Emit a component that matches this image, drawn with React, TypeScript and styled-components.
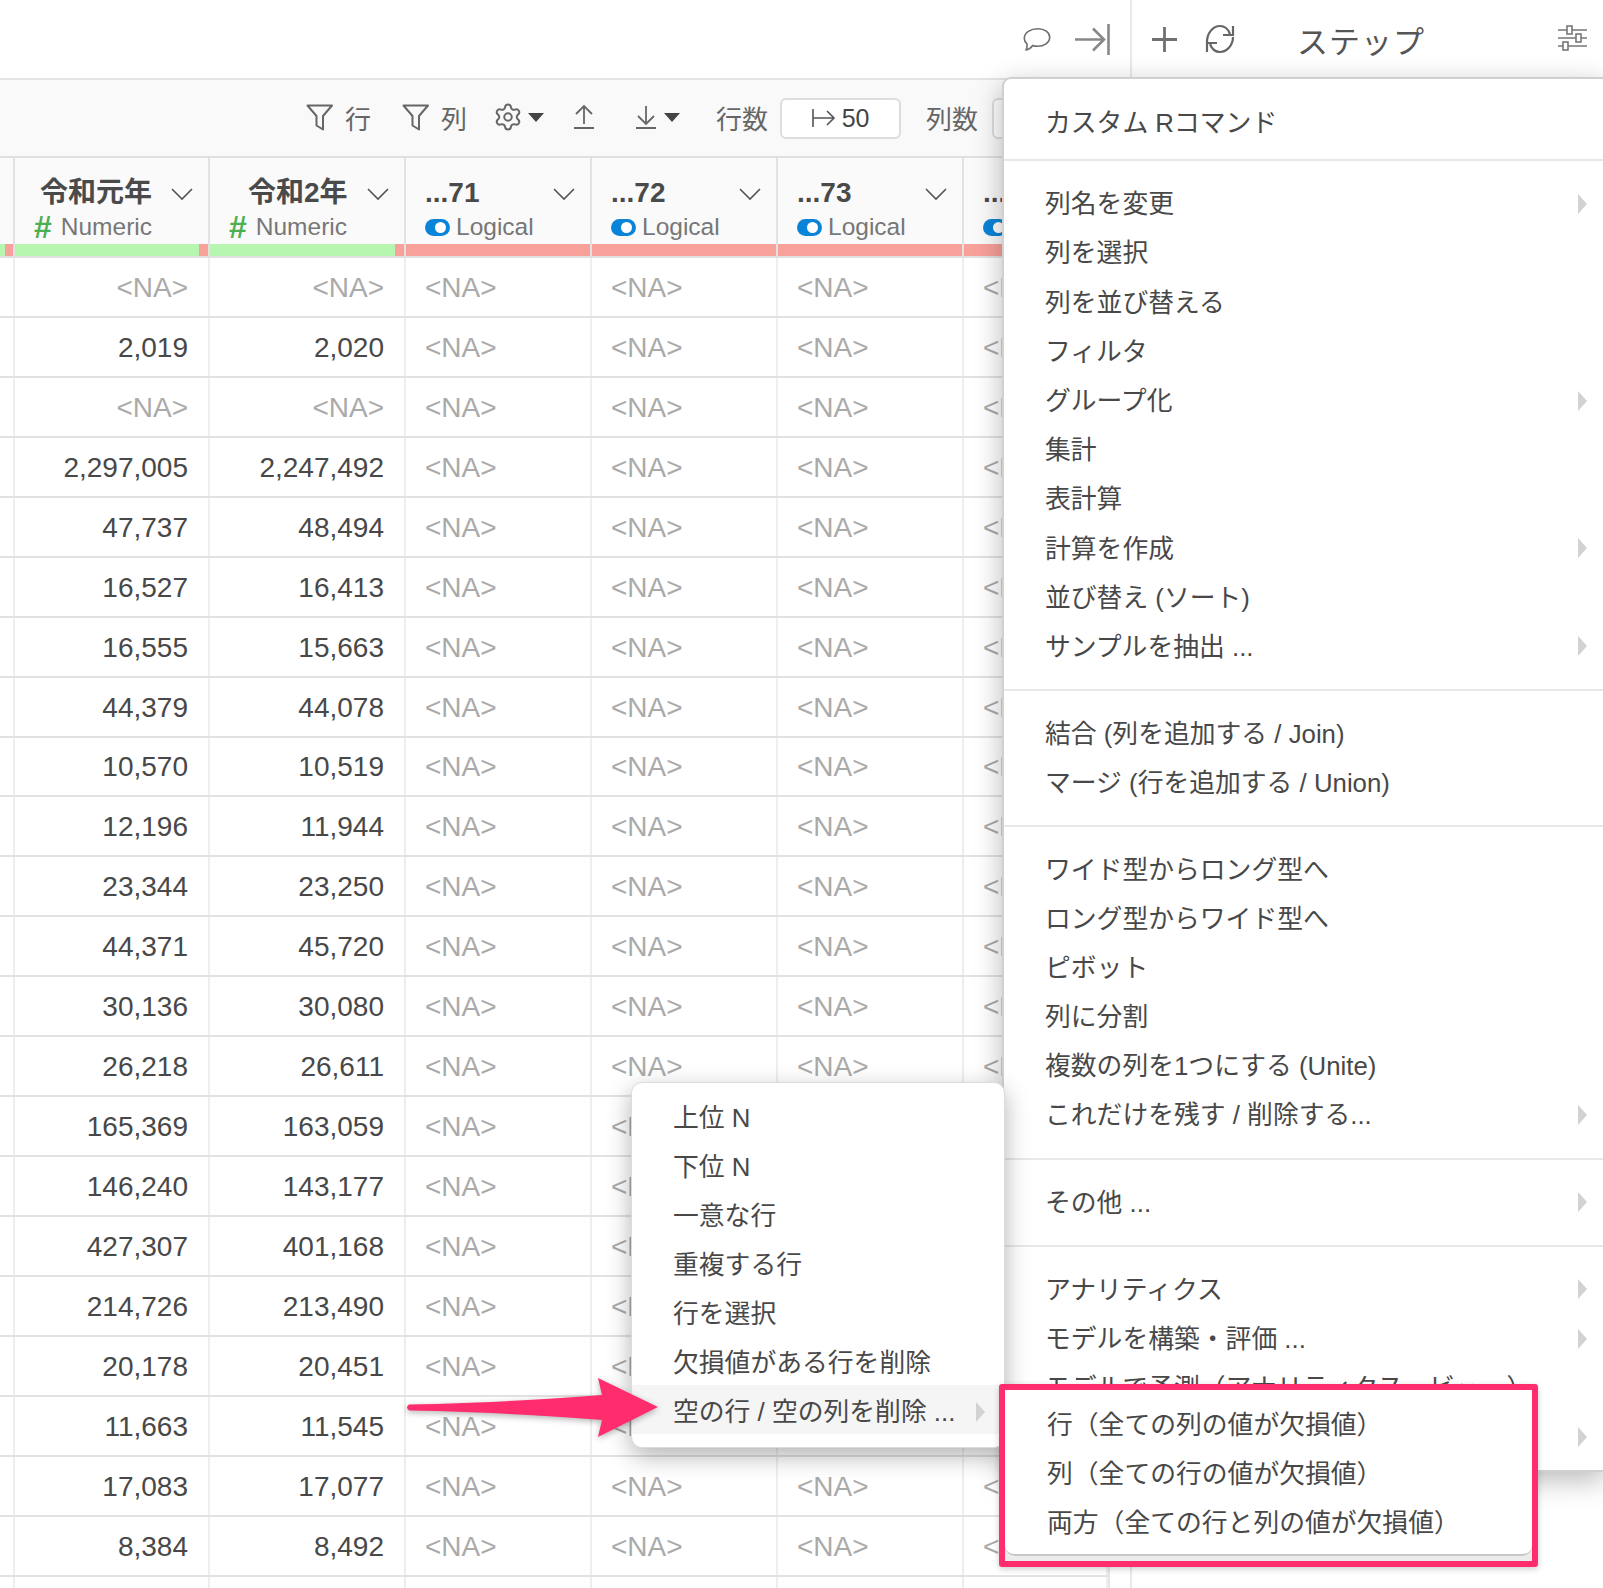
import React from "react";
import styled, { createGlobalStyle } from "styled-components";
import { Settings } from "lucide-react";

const Global = createGlobalStyle`
  html, body { margin: 0; padding: 0; background: #fff; }
  * { box-sizing: border-box; }
  #root { width: 1603px; height: 1588px; overflow: hidden; position: relative; }
`;

const FONT = `"Liberation Sans", "Noto Sans CJK JP", sans-serif`;

const Page = styled.div`
  display: flex;
  width: 1603px;
  height: 1588px;
  overflow: hidden;
  position: relative;
  font-family: ${FONT};
  color: #444;
  background: #fff;
`;
const LeftPane = styled.div`
  width: 1130px;
  flex: none;
  display: flex;
  flex-direction: column;
`;
const RightPane = styled.div`
  flex: 1;
  border-left: 2px solid #e9e9e9;
`;
const TopBar = styled.div`
  height: 78px;
  flex: none;
  display: flex;
  align-items: center;
  justify-content: flex-end;
  padding-right: 19px;
  gap: 24px;
  color: #777;
`;
const RightHeader = styled.div`
  height: 78px;
  display: flex;
  align-items: center;
  padding-left: 20px;
  color: #666;
`;
const RefreshSlot = styled.span`
  display: flex;
  margin-left: 28px;
`;
const StepTitle = styled.div`
  font-size: 31px;
  letter-spacing: 1px;
  color: #555;
  margin-left: 62px;
  flex: 1;
`;
const SliderSlot = styled.span`
  display: flex;
  margin: 0 16px 2px 0;
`;
const Toolbar = styled.div`
  height: 80px;
  flex: none;
  display: flex;
  align-items: center;
  background: #f9f9f9;
  border-top: 2px solid #e4e4e4;
  border-bottom: 2px solid #e0e0e0;
  padding: 0 0 2px 306px;
  font-size: 26px;
  color: #666;
`;
const ToolItem = styled.span<{ $ml?: number }>`
  display: inline-flex;
  align-items: center;
  margin-left: ${(p) => p.$ml ?? 0}px;
  color: #666;
  white-space: nowrap;
`;
const ToolLabel = styled.span`
  margin-left: 12px;
`;
const Caret = styled.span<{ $ml?: number }>`
  display: inline-block;
  width: 0;
  height: 0;
  margin-left: ${(p) => p.$ml ?? 7}px;
  border-left: 8px solid transparent;
  border-right: 8px solid transparent;
  border-top: 9px solid #444;
`;
const RowCountBtn = styled.span`
  width: 121px;
  height: 41px;
  margin: 2px 0 0 12px;
  display: inline-flex;
  align-items: center;
  justify-content: center;
  gap: 6px;
  background: #fff;
  border: 2px solid #ddd;
  border-radius: 6px;
  font-size: 25px;
  color: #444;
`;
const ColCountBtn = styled(RowCountBtn)`
  margin-left: 14px;
`;
const Table = styled.div`
  width: 1110px;
  flex: 1;
  border-right: 2px solid #e6e6e6;
  overflow: hidden;
`;
const COLS = "15px 195px 196px 186px 186px 186px 144px";
const HeadRow = styled.div`
  display: grid;
  grid-template-columns: ${COLS};
  height: 100px;
  background: #fafafa;
  border-bottom: 2px solid #e0e0e0;
`;
const HeadCell = styled.div`
  position: relative;
  display: flex;
  flex-direction: column;
  border-right: 2px solid #e2e2e2;
  min-width: 0;
  overflow: hidden;
`;
const HeadMain = styled.div<{ $titlePad: number }>`
  height: 52px;
  padding: 18px 0 0 ${(p) => p.$titlePad}px;
  font-size: 28px;
  line-height: 34px;
  font-weight: 700;
  color: #4a4a4a;
  white-space: nowrap;
  display: flex;
  justify-content: space-between;
`;
const ChevronSlot = styled.span`
  display: flex;
  margin: 11px 14px 0 0;
`;
const TypeRow = styled.div`
  height: 34px;
  padding-left: 19px;
  display: flex;
  align-items: center;
  font-size: 24.5px;
  color: #777;
  white-space: nowrap;
`;
const Hash = styled.span`
  color: #4caf50;
  font-weight: 700;
  font-size: 32px;
  line-height: 32px;
  margin-right: 9px;
`;
const Toggle = styled.span`
  display: inline-flex;
  align-items: center;
  justify-content: flex-end;
  width: 25px;
  height: 17px;
  padding-right: 4px;
  border-radius: 9px;
  background: #0a84d8;
  margin-right: 6px;
  flex: none;
  &::after {
    content: "";
    width: 11px;
    height: 11px;
    border-radius: 50%;
    background: #fff;
  }
`;
const Bar = styled.div`
  height: 12px;
  background: #f8a09a;
  display: flex;
  margin-top: auto;
`;
const BarFill = styled.div`
  height: 100%;
  background: #b6f6b0;
`;
const Row = styled.div`
  display: grid;
  grid-template-columns: ${COLS};
  height: 59.95px;
  border-bottom: 2px solid #e2e2e2;
`;
const Cell = styled.div<{ $na?: boolean; $left?: boolean }>`
  border-right: 2px solid #eeeeee;
  font-size: 28px;
  display: flex;
  align-items: center;
  justify-content: ${(p) => (p.$left ? "flex-start" : "flex-end")};
  padding: ${(p) => (p.$left ? "2px 0 0 19px" : "2px 20px 0 0")};
  color: ${(p) => (p.$na ? "#aaaaaa" : "#484848")};
  white-space: nowrap;
  overflow: hidden;
`;
const SliverCell = styled.div`
  border-right: 2px solid #eeeeee;
`;

const MainMenu = styled.div`
  position: absolute;
  left: 1002px;
  top: 77px;
  width: 603px;
  height: 1395px;
  background: #fff;
  border: 2px solid #d0d0d0;
  border-radius: 9px 0 0 0;
  box-shadow: 0 8px 28px rgba(0, 0, 0, 0.28);
  font-size: 25.8px;
  color: #484848;
  overflow: hidden;
`;
const Section = styled.div<{ $top?: number; $bottom?: number }>`
  padding: ${(p) => p.$top ?? 16}px 0 ${(p) => p.$bottom ?? 20}px;
  border-bottom: 2px solid #e8e8e8;
  &:last-child {
    border-bottom: none;
  }
`;
const MenuItem = styled.div<{ $pad?: number; $padR?: number; $h?: number; $active?: boolean }>`
  height: ${(p) => p.$h ?? 49.2}px;
  display: flex;
  align-items: center;
  justify-content: space-between;
  padding: 0 ${(p) => p.$padR ?? 16}px 0 ${(p) => p.$pad ?? 41}px;
  white-space: nowrap;
  background: ${(p) => (p.$active ? "#f5f5f5" : "transparent")};
`;
const SubArrow = styled.span`
  width: 0;
  height: 0;
  margin-top: 4px;
  border-top: 10px solid transparent;
  border-bottom: 10px solid transparent;
  border-left: 9px solid #d2d2d2;
  flex: none;
`;
const FilterMenu = styled.div`
  position: absolute;
  left: 631px;
  top: 1082px;
  width: 374px;
  height: 366px;
  padding: 8px 0;
  background: #fff;
  border: 1px solid #dcdcdc;
  border-radius: 11px;
  box-shadow: 0 8px 24px rgba(0, 0, 0, 0.3);
  font-size: 25.8px;
  color: #484848;
`;
const Highlight = styled.div`
  position: absolute;
  left: 999px;
  top: 1384px;
  width: 539px;
  height: 183px;
  border: 6px solid #ff2d6d;
  border-radius: 3px;
  background: #ececec;
  box-shadow: 0 2px 6px rgba(0, 0, 0, 0.2);
`;
const SideMenu = styled.div`
  height: 166px;
  padding-top: 8px;
  background: #fff;
  border-bottom: 2px solid #c8c8c8;
  border-radius: 0 0 10px 10px;
  font-size: 25.8px;
  color: #484848;
`;
const ArrowSvg = styled.svg`
  position: absolute;
  left: 400px;
  top: 1370px;
  filter: drop-shadow(0 2px 3px rgba(0, 0, 0, 0.3));
`;

const Rows: [string, string][] = [
  ["", ""], ["2,019", "2,020"], ["", ""], ["2,297,005", "2,247,492"],
  ["47,737", "48,494"], ["16,527", "16,413"], ["16,555", "15,663"],
  ["44,379", "44,078"], ["10,570", "10,519"], ["12,196", "11,944"],
  ["23,344", "23,250"], ["44,371", "45,720"], ["30,136", "30,080"],
  ["26,218", "26,611"], ["165,369", "163,059"], ["146,240", "143,177"],
  ["427,307", "401,168"], ["214,726", "213,490"], ["20,178", "20,451"],
  ["11,663", "11,545"], ["17,083", "17,077"], ["8,384", "8,492"],
];

const NA = "<NA>";

const Chevron = () => (
  <svg width="24" height="14" viewBox="0 0 24 14" fill="none" stroke="#555" strokeWidth="1.6">
    <path d="M2 2l10 10L22 2" />
  </svg>
);
const Funnel = () => (
  <svg width="27" height="27" viewBox="0 0 27 27" fill="none" stroke="#666" strokeWidth="2" strokeLinejoin="round">
    <path d="M1.500 1.500H26L17 12V25.500L10.500 21.500V12Z" />
  </svg>
);
const UpArrow = () => (
  <svg width="22" height="26" viewBox="0 0 22 26" fill="none" stroke="#666" strokeWidth="1.8">
    <path d="M11 20V2M3 10l8-8 8 8M1 24h20" />
  </svg>
);
const DownArrow = () => (
  <svg width="22" height="26" viewBox="0 0 22 26" fill="none" stroke="#666" strokeWidth="1.8">
    <path d="M11 2v18M3 12l8 8 8-8M1 24h20" />
  </svg>
);
const Bubble = () => (
  <svg width="28" height="25" viewBox="0 0 26 23" fill="none" stroke="#6e6e6e" strokeWidth="1.500" strokeLinejoin="round">
    <path d="M14 1.500C20 1.500 24.800 4.800 24.800 9.500C24.800 14.500 19.500 17.800 13.500 17.800C11.800 17.800 10.200 17.500 9 17C7.500 19 5.500 20.800 2.800 21.300C3.800 19.500 4 17.500 3.700 15.500C2 14 1.200 12.200 1.200 10.500C1.200 5 7 1.500 14 1.500Z" />
  </svg>
);
const ToLine = () => (
  <svg width="36" height="31" viewBox="0 0 36 31" fill="none" stroke="#888" strokeWidth="2.600">
    <path d="M0 15.500h29M18 4.500l11 11-11 11" />
    <path d="M33.500 0v31" />
  </svg>
);
const Plus = () => (
  <svg width="25" height="25" viewBox="0 0 25 25" fill="none" stroke="#707070" strokeWidth="2.800">
    <path d="M12.500 0v25M0 12.500h25" />
  </svg>
);
const Sync = () => (
  <svg width="30" height="30" viewBox="0 0 30 30" fill="none" stroke="#666" strokeWidth="2.200">
    <path d="M2 18C2 9 8 2 15 2C19.500 2 23 4.500 25 10" />
    <path d="M28 2v9H18" />
    <path d="M28 13C28 21 22 28 15 28C10.500 28 7 25.500 5 20" />
    <path d="M2 28v-9h10" />
  </svg>
);
const Sliders = () => (
  <svg width="29" height="26" viewBox="0 0 29 26" fill="none" stroke="#777" strokeWidth="1.600">
    <path d="M0 5h29M0 13h29M0 21h29" />
    <rect x="9" y="1" width="5" height="8" fill="#fff" />
    <rect x="18" y="9" width="5" height="8" fill="#fff" />
    <rect x="5" y="17" width="5" height="8" fill="#fff" />
  </svg>
);
const FromLine = () => (
  <svg width="24" height="20" viewBox="0 0 24 20" fill="none" stroke="#555" strokeWidth="1.600">
    <path d="M1 1v18M1 10h21M15 3l7 7-7 7" />
  </svg>
);

type Entry = { label: string; sub?: boolean };
const sections: { top?: number; bottom?: number; items: Entry[] }[] = [
  { top: 17, bottom: 14, items: [{ label: "カスタム Rコマンド" }] },
  {
    items: [
      { label: "列名を変更", sub: true }, { label: "列を選択" }, { label: "列を並び替える" },
      { label: "フィルタ" }, { label: "グループ化", sub: true }, { label: "集計" },
      { label: "表計算" }, { label: "計算を作成", sub: true }, { label: "並び替え (ソート)" },
      { label: "サンプルを抽出 ...", sub: true },
    ],
  },
  { items: [{ label: "結合 (列を追加する / Join)" }, { label: "マージ (行を追加する / Union)" }] },
  {
    top: 15,
    items: [
      { label: "ワイド型からロング型へ" }, { label: "ロング型からワイド型へ" }, { label: "ピボット" },
      { label: "列に分割" }, { label: "複数の列を1つにする (Unite)" },
      { label: "これだけを残す / 削除する...", sub: true },
    ],
  },
  { items: [{ label: "その他 ...", sub: true }] },
  {
    items: [
      { label: "アナリティクス", sub: true }, { label: "モデルを構築・評価 ...", sub: true },
      { label: "モデルで予測（アナリティクス・ビュー）" }, { label: "エクスポート", sub: true },
    ],
  },
];

const filterItems = ["上位 N", "下位 N", "一意な行", "重複する行", "行を選択", "欠損値がある行を削除"];
const sideItems = ["行（全ての列の値が欠損値）", "列（全ての行の値が欠損値）", "両方（全ての行と列の値が欠損値）"];

const columns = [
  { title: "令和元年", pad: 25, fill: 95.5, numeric: true },
  { title: "令和2年", pad: 38, fill: 95.5, numeric: true },
  { title: "...71", pad: 19, fill: 0, numeric: false },
  { title: "...72", pad: 19, fill: 0, numeric: false },
  { title: "...73", pad: 19, fill: 0, numeric: false },
  { title: "...74", pad: 19, fill: 0, numeric: false },
];

export default function App() {
  return (
    <Page>
      <Global />
      <LeftPane>
        <TopBar>
          <Bubble />
          <ToLine />
        </TopBar>
        <Toolbar>
          <ToolItem><Funnel /><ToolLabel>行</ToolLabel></ToolItem>
          <ToolItem $ml={31}><Funnel /><ToolLabel>列</ToolLabel></ToolItem>
          <ToolItem $ml={26}><Settings size={30} strokeWidth={1.6} color="#666" /><Caret $ml={5} /></ToolItem>
          <ToolItem $ml={29}><UpArrow /></ToolItem>
          <ToolItem $ml={40}><DownArrow /><Caret /></ToolItem>
          <ToolItem $ml={36}>行数</ToolItem>
          <RowCountBtn><FromLine />50</RowCountBtn>
          <ToolItem $ml={25}>列数</ToolItem>
          <ColCountBtn />
        </Toolbar>
        <Table>
          <HeadRow>
            <HeadCell><Bar><BarFill style={{ width: "36%" }} /></Bar></HeadCell>
            {columns.map((c) => (
              <HeadCell key={c.title}>
                <HeadMain $titlePad={c.pad}>
                  {c.title}
                  <ChevronSlot><Chevron /></ChevronSlot>
                </HeadMain>
                <TypeRow>
                  {c.numeric ? <Hash>#</Hash> : <Toggle />}
                  {c.numeric ? "Numeric" : "Logical"}
                </TypeRow>
                <Bar><BarFill style={{ width: `${c.fill}%` }} /></Bar>
              </HeadCell>
            ))}
          </HeadRow>
          {Rows.map(([a, b], i) => (
            <Row key={i}>
              <SliverCell />
              <Cell $na={!a}>{a || NA}</Cell>
              <Cell $na={!b}>{b || NA}</Cell>
              <Cell $na $left>{NA}</Cell>
              <Cell $na $left>{NA}</Cell>
              <Cell $na $left>{NA}</Cell>
              <Cell $na $left>{NA}</Cell>
            </Row>
          ))}
          <Row>
            <SliverCell /><SliverCell /><SliverCell /><SliverCell /><SliverCell /><SliverCell /><SliverCell />
          </Row>
        </Table>
      </LeftPane>
      <RightPane>
        <RightHeader>
          <Plus />
          <RefreshSlot><Sync /></RefreshSlot>
          <StepTitle>ステップ</StepTitle>
          <SliderSlot><Sliders /></SliderSlot>
        </RightHeader>
      </RightPane>

      <MainMenu>
        {sections.map((s, i) => (
          <Section key={i} $top={s.top} $bottom={s.bottom}>
            {s.items.map((it) => (
              <MenuItem key={it.label}>
                {it.label}
                {it.sub && <SubArrow />}
              </MenuItem>
            ))}
          </Section>
        ))}
      </MainMenu>

      <FilterMenu>
        {filterItems.map((t) => (
          <MenuItem key={t} $pad={41} $h={49}>{t}</MenuItem>
        ))}
        <MenuItem $pad={41} $padR={19} $h={49} $active>
          空の行 / 空の列を削除 ...
          <SubArrow />
        </MenuItem>
      </FilterMenu>

      <Highlight>
        <SideMenu>
          {sideItems.map((t) => (
            <MenuItem key={t} $pad={42}>{t}</MenuItem>
          ))}
        </SideMenu>
      </Highlight>

      <ArrowSvg width="270" height="75" viewBox="400 1370 270 75">
        <path
          d="M409 1404.500Q500 1403 602 1395L598 1378L658 1407L598 1437L602 1420Q500 1412 409 1410.500Q405 1407.500 409 1404.500Z"
          fill="#ff2d6d"
        />
      </ArrowSvg>
    </Page>
  );
}
